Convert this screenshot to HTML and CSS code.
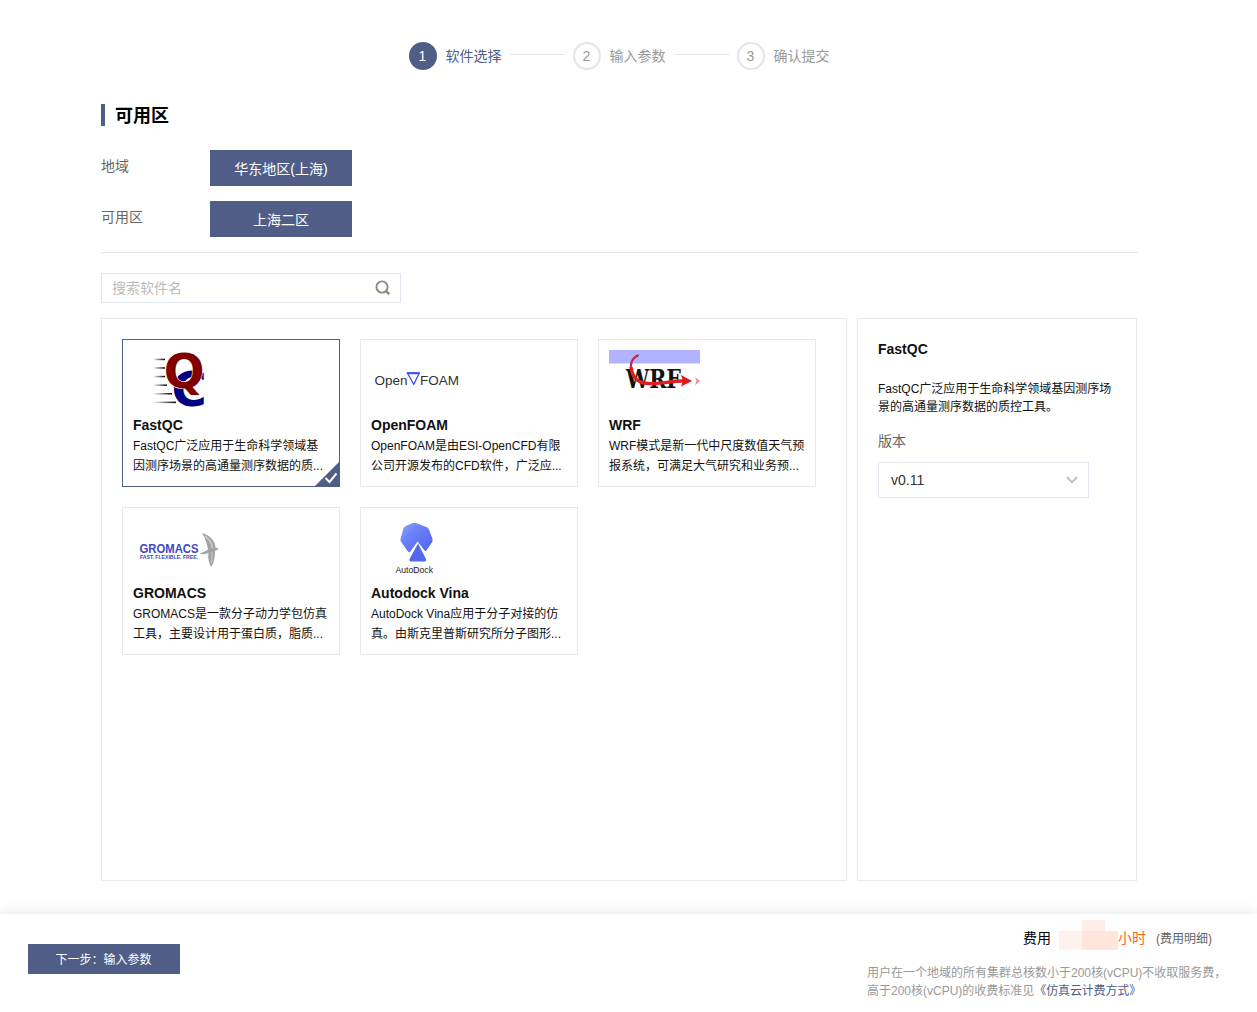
FILE: index.html
```html
<!DOCTYPE html>
<html lang="zh-CN">
<head>
<meta charset="utf-8">
<title>软件选择</title>
<link rel="stylesheet" href="styles.css">
</head>
<body>
<main class="content">
  <ol class="steps">
    <li class="step active"><span class="num">1</span><span class="step-label">软件选择</span></li>
    <li class="step-line"></li>
    <li class="step"><span class="num">2</span><span class="step-label">输入参数</span></li>
    <li class="step-line"></li>
    <li class="step"><span class="num">3</span><span class="step-label">确认提交</span></li>
  </ol>

  <section class="zone">
    <h2 class="heading">可用区</h2>
    <div class="zone-row"><span class="zone-label">地域</span><button class="zone-btn">华东地区(上海)</button></div>
    <div class="zone-row"><span class="zone-label">可用区</span><button class="zone-btn">上海二区</button></div>
  </section>

  <div class="search">
    <span>搜索软件名</span>
    <svg width="16" height="16" viewBox="0 0 16 16" fill="none" stroke="#8a8a8a" stroke-width="1.9"><circle cx="7" cy="7" r="5.6"/><path d="M10.800 11l3.600 3.200" stroke-width="2.400"/></svg>
  </div>

  <div class="panels">
    <section class="apps">
      <article class="card selected">
        <svg class="logo" width="91" height="65" viewBox="0 0 91 65">
          <defs><linearGradient id="speed"><stop offset="0" stop-color="#000" stop-opacity="0"/><stop offset="1" stop-color="#000"/></linearGradient></defs>
          <g fill="url(#speed)"><rect x="20" y="8.700" width="12" height="1.500"/><rect x="20" y="17.200" width="12" height="1.500"/><rect x="20" y="25.800" width="12" height="1.500"/><rect x="20" y="34.400" width="14" height="1.500"/><rect x="20" y="43" width="19" height="1.500"/><rect x="20" y="51.600" width="23" height="1.500"/></g>
          <text class="logo-c" x="38.600" y="55.500">C</text>
          <text class="logo-q" x="30.700" y="38.300">Q</text>
        </svg>
        <h3>FastQC</h3>
        <p>FastQC广泛应用于生命科学领域基<br>因测序场景的高通量测序数据的质...</p>
        <svg class="tick" width="26" height="26" viewBox="0 0 26 26"><path d="M26 0v26H0z" fill="#505e87"/><path d="M11.500 17l4 4 7-8.500" fill="none" stroke="#fff" stroke-width="2"/></svg>
      </article>
      <article class="card">
        <svg class="logo" width="91" height="65" viewBox="0 0 91 65">
          <text class="logo-foam" x="3.500" y="35" textLength="33" lengthAdjust="spacingAndGlyphs">Open</text>
          <text class="logo-foam" x="49" y="35" textLength="39" lengthAdjust="spacingAndGlyphs">FOAM</text>
          <path d="M36.500 23.200h11.700l-5.400 11.200z" fill="#fff" stroke="#4747ff" stroke-width="1.300"/><path d="M36 23.200h12.600" stroke="#4747ff" stroke-width="2"/>
        </svg>
        <h3>OpenFOAM</h3>
        <p>OpenFOAM是由ESI-OpenCFD有限<br>公司开源发布的CFD软件，广泛应...</p>
      </article>
      <article class="card">
        <svg class="logo" width="91" height="65" viewBox="0 0 91 65">
          <path d="M0 0h91v13.500H0z" fill="#b2b3ff"/>
          <text class="logo-wrf" x="17" y="37.500" textLength="55" lengthAdjust="spacingAndGlyphs">WRF</text>
          <path d="M29.500 5C22.500 8.500 20.500 14 22.500 21.500" fill="none" stroke="#c2284a" stroke-width="2"/>
          <path d="M22 17c1 9 6 16 17 16.500 12 .5 23-2.500 35-2.500" fill="none" stroke="#e02020" stroke-width="3.300"/>
          <path d="M72 25l11 6-11 5.500 2-5.500z" fill="#e01818"/><path d="M86 27l5 4-5 4.500 1.500-4.500z" fill="#e78d98"/>
        </svg>
        <h3>WRF</h3>
        <p>WRF模式是新一代中尺度数值天气预<br>报系统，可满足大气研究和业务预...</p>
      </article>
      <article class="card">
        <svg class="logo" width="91" height="65" viewBox="0 0 91 65">
          <text class="logo-gro" x="6.500" y="35" textLength="59" lengthAdjust="spacingAndGlyphs">GROMACS</text>
          <text class="logo-tag" x="7" y="41" textLength="58" lengthAdjust="spacingAndGlyphs">FAST. FLEXIBLE. FREE.</text>
          <path d="M69 15c8 2 13 8 13.500 14.500l3.500 1.500-4 2c0 6-1 12-4 16-2-4-3.500-9-2.500-14-3 1-5 1.500-9 .8 3-1.300 6-2.300 8.500-4.300-1-6-2.500-11-6-16.500z" fill="#a3a2a2"/><path d="M72 18c4 3 7 7 7.500 12" fill="none" stroke="#c8c6c6" stroke-width="2"/><path d="M79 34l-.5 11" stroke="#c1bfbf" stroke-width="1.500"/>
        </svg>
        <h3>GROMACS</h3>
        <p>GROMACS是一款分子动力学包仿真<br>工具，主要设计用于蛋白质，脂质...</p>
      </article>
      <article class="card">
        <svg class="logo" width="91" height="65" viewBox="0 0 91 65">
          <defs><linearGradient id="gem" x2="1" y2="1"><stop stop-color="#91a4fa"/><stop offset=".35" stop-color="#6b83f7"/><stop offset="1" stop-color="#4e61ee"/></linearGradient></defs>
          <path d="M42 5.500h3L56.500 10l1 1.500L61 21v2.500L54.500 33l-8-10-8 11-1.500-1L30 23v-2l3-11 1.500-1.500z" fill="url(#gem)" stroke="url(#gem)" stroke-linejoin="round"/>
          <path d="M47 25.500L38.500 41q-.8 1.800 1 2.500H54q2-.7 1-2.500z" fill="#5269ec" stroke="#fff" stroke-width="1.400" paint-order="stroke"/>
          <ellipse cx="46" cy="51" rx="6" ry="6" fill="#f1f3ff"/>
          <text class="logo-dock" x="24.500" y="54.500" textLength="37.500" lengthAdjust="spacingAndGlyphs">AutoDock</text>
        </svg>
        <h3>Autodock Vina</h3>
        <p>AutoDock Vina应用于分子对接的仿<br>真。由斯克里普斯研究所分子图形...</p>
      </article>
    </section>

    <aside class="detail">
      <h3>FastQC</h3>
      <p>FastQC广泛应用于生命科学领域基因测序场<br>景的高通量测序数据的质控工具。</p>
      <div class="version-label">版本</div>
      <div class="select"><span>v0.11</span>
        <svg width="12" height="8" viewBox="0 0 12 8" fill="none" stroke="#b9c1ce" stroke-width="2"><path d="M.8 1L6 6.200 11.200 1"/></svg>
      </div>
    </aside>
  </div>
</main>

<footer class="footer">
  <button class="next">下一步：输入参数</button>
  <div class="cost">
    <div class="price"><span>费用</span>
      <svg class="mask" width="59" height="30" viewBox="0 0 59 30" shape-rendering="crispEdges"><path d="M0 0h23v11H0z" fill="#fffdfd"/><path d="M23 0h23v11H23z" fill="#ffeee8"/><path d="M0 11h23v19H0z" fill="#fff1ed"/><path d="M23 11h36v19H23z" fill="#ffe5dc"/></svg>
      <span class="unit">小时</span><a class="bill">(费用明细)</a>
    </div>
    <p>用户在一个地域的所有集群总核数小于200核(vCPU)不收取服务费，<br>高于200核(vCPU)的收费标准见<a class="doc">《仿真云计费方式》</a></p>
  </div>
</footer>
</body>
</html>
```
FILE: styles.css
```css
* { box-sizing: border-box; }
body { margin: 0; height: 1012px; display: flex; flex-direction: column; overflow: hidden; background: #fff; color: #111; font: 14px/20px "Liberation Sans", "Noto Sans CJK SC", sans-serif; }
h2, h3, p, ol { margin: 0; padding: 0; }
button { border: 0; padding: 0; background: #505e87; color: #fff; font: inherit; }
svg { display: block; flex: none; }
.content { height: 914px; padding: 42px 119px 0 101px; }

.steps { display: flex; justify-content: center; list-style: none; height: 28px; margin-right: 1px; }
.step { display: flex; align-items: center; gap: 9px; color: #999; }
.num { width: 28px; height: 28px; border: 2px solid #e1e5ed; border-radius: 50%; text-align: center; line-height: 24px; }
.active { color: #505e87; }
.active .num { background: #505e87; border-color: #505e87; color: #fff; }
.step-line { width: 55px; height: 1px; background: #e1e5ed; margin: 12px 8px 0; }

.zone { height: 149px; margin-top: 34px; border-bottom: 1px solid #e8e8e8; display: flex; flex-direction: column; }
.heading { height: 22px; border-left: 4px solid #505e87; padding-left: 10px; color: #000; font-size: 18px; line-height: 25px; margin-bottom: 24px; }
.zone-row { display: flex; height: 36px; margin-bottom: 15px; }
.zone-row:last-child { margin-bottom: 0; }
.zone-label { width: 109px; color: #666; line-height: 32px; }
.zone-btn { width: 142px; line-height: 38px; }

.search { width: 300px; height: 30px; margin: 20px 0 15px; padding: 0 9px 0 10px; border: 1px solid #e1e5ed; display: flex; align-items: center; justify-content: space-between; color: #bbb; }
.panels { display: flex; gap: 10px; height: 563px; }
.apps { width: 746px; border: 1px solid #e8e9ed; padding: 20px; display: grid; grid-template-columns: repeat(3, 218px); grid-auto-rows: 148px; gap: 20px; align-content: start; }
.card { position: relative; border: 1px solid #e8e9ed; padding: 10px; white-space: nowrap; }
.selected { border-color: #505e87; }
h3 { font-size: 14px; line-height: 20px; color: #111; }
.card p { padding-top: 1px; font-size: 12px; line-height: 20px; }
.tick { position: absolute; right: -1px; bottom: -1px; }

.logo-q, .logo-c { font: bold 48px "DejaVu Sans", sans-serif; }
.logo-q { fill: #800000; stroke: #fff; stroke-width: 1.2px; paint-order: stroke; }
.logo-c { fill: #000080; }
.logo-foam { font-size: 13px; fill: #333; }
.logo-wrf { font: bold 26px "DejaVu Serif", serif; fill: #111; }
.logo-gro { font-size: 12px; font-weight: bold; fill: #4149c0; }
.logo-tag { font-size: 5px; font-weight: bold; fill: #4149c0; }
.logo-dock { font-size: 9px; fill: #222; }

.detail { width: 280px; border: 1px solid #e8e9ed; padding: 20px; }
.detail p { margin: 21px 0 15px; font-size: 12px; line-height: 18px; white-space: nowrap; }
.version-label { color: #666; line-height: 20px; margin-bottom: 11px; }
.select { width: 211px; height: 36px; padding: 0 10px 0 12px; border: 1px solid #e1e5ed; display: flex; align-items: center; justify-content: space-between; color: #333; }

.footer { height: 98px; display: flex; justify-content: space-between; padding: 0 32px 0 28px; background: #fff; box-shadow: 0 0 12px rgba(80, 85, 110, .18); }
.next { width: 152px; height: 30px; margin-top: 30px; padding: 2px 1px 0 0; font-size: 12px; }
.cost { width: 358px; padding-top: 6px; color: #999; font-size: 12px; line-height: 18px; white-space: nowrap; }
.price { display: flex; height: 30px; margin: 0 0 14px 156px; line-height: 36px; font-size: 14px; color: #000; }
.mask { margin-left: 8px; }
.unit { color: #ff6418; }
.bill { margin-left: 10px; padding-top: 1px; color: #666; font-size: 12px; }
.doc { color: #505e87; letter-spacing: -.15px; }
```
